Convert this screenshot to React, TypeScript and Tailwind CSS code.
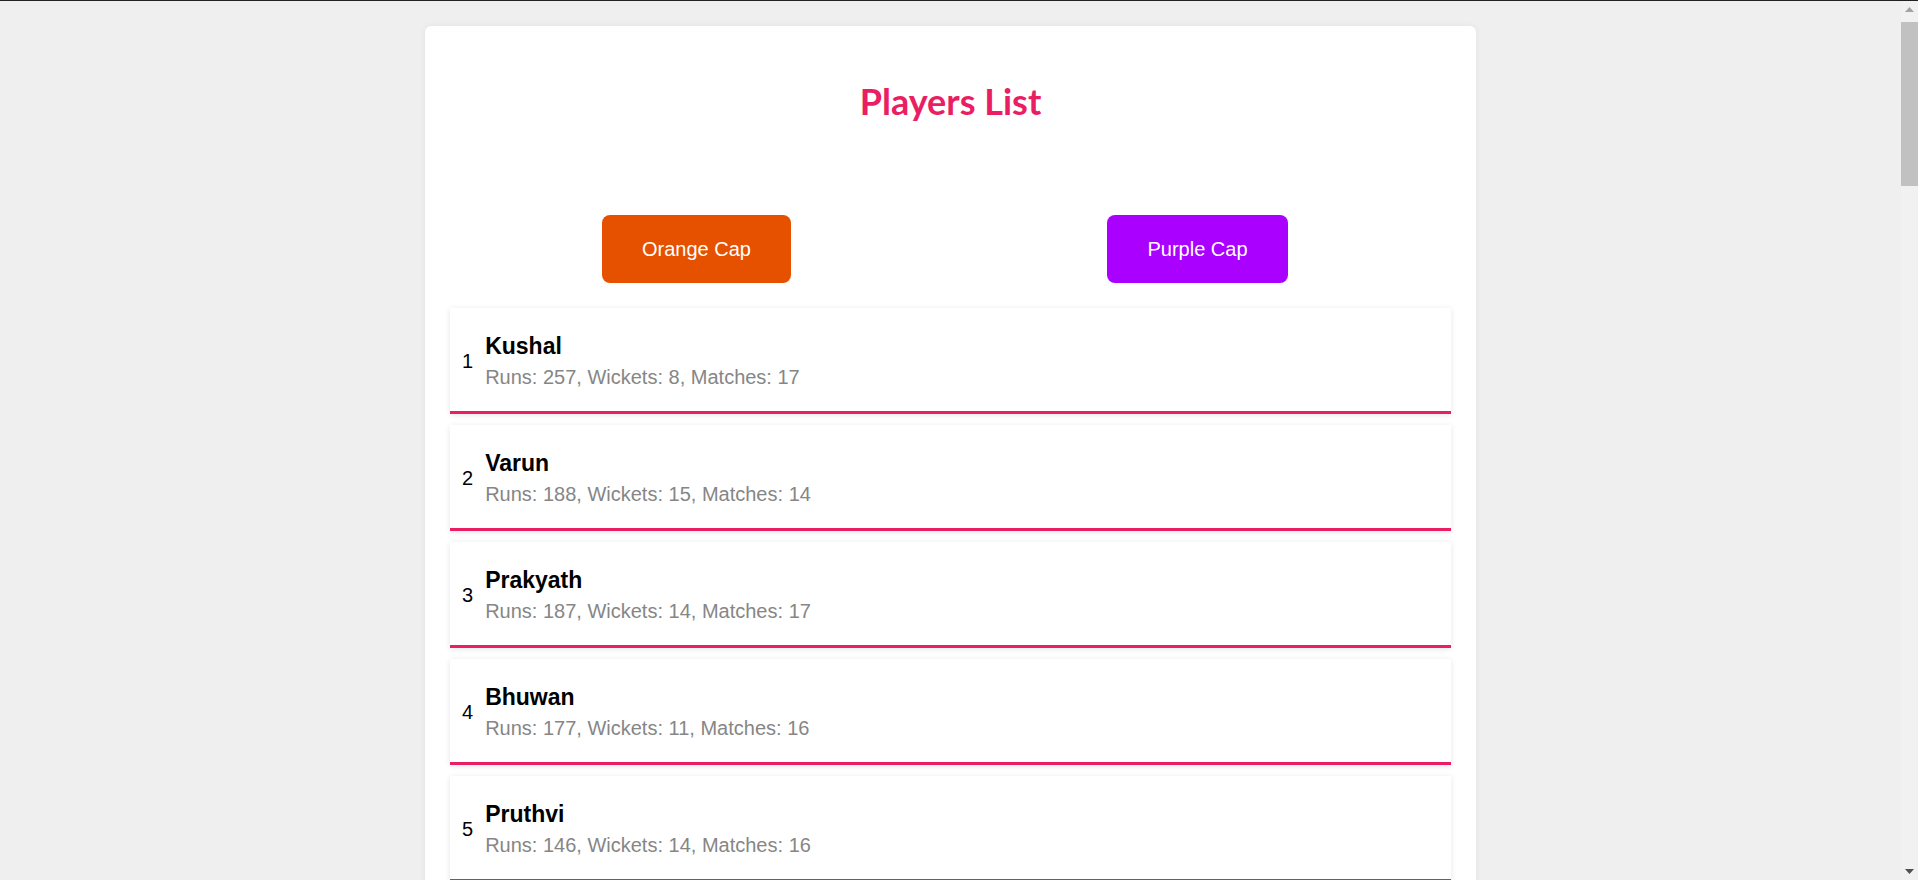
const players = [
  { name: "Kushal", runs: 257, wickets: 8, matches: 17 },
  { name: "Varun", runs: 188, wickets: 15, matches: 14 },
  { name: "Prakyath", runs: 187, wickets: 14, matches: 17 },
  { name: "Bhuwan", runs: 177, wickets: 11, matches: 16 },
  { name: "Pruthvi", runs: 146, wickets: 14, matches: 16 },
  { name: "Sharath", runs: 140, wickets: 9, matches: 15 },
  { name: "Manoj", runs: 132, wickets: 12, matches: 16 },
  { name: "Karthik", runs: 128, wickets: 6, matches: 14 },
  { name: "Rohan", runs: 121, wickets: 10, matches: 15 },
  { name: "Nikhil", runs: 117, wickets: 7, matches: 13 },
  { name: "Abhishek", runs: 110, wickets: 13, matches: 16 },
  { name: "Sagar", runs: 104, wickets: 5, matches: 12 },
  { name: "Darshan", runs: 98, wickets: 16, matches: 17 },
  { name: "Vinay", runs: 95, wickets: 9, matches: 14 },
  { name: "Akash", runs: 91, wickets: 4, matches: 11 },
  { name: "Chetan", runs: 87, wickets: 12, matches: 15 },
  { name: "Harsha", runs: 82, wickets: 8, matches: 13 },
  { name: "Shreyas", runs: 79, wickets: 3, matches: 10 },
  { name: "Tejas", runs: 74, wickets: 11, matches: 14 },
  { name: "Sumanth", runs: 70, wickets: 6, matches: 12 },
  { name: "Pavan", runs: 66, wickets: 10, matches: 13 },
  { name: "Naveen", runs: 61, wickets: 2, matches: 9 },
  { name: "Rakesh", runs: 58, wickets: 7, matches: 11 },
  { name: "Suhas", runs: 54, wickets: 9, matches: 12 },
  { name: "Yashas", runs: 50, wickets: 5, matches: 10 },
  { name: "Gagan", runs: 47, wickets: 8, matches: 11 },
  { name: "Adarsh", runs: 43, wickets: 1, matches: 8 },
  { name: "Kiran", runs: 40, wickets: 6, matches: 10 },
  { name: "Mithun", runs: 36, wickets: 4, matches: 9 },
  { name: "Rahul", runs: 33, wickets: 7, matches: 10 },
  { name: "Deepak", runs: 29, wickets: 3, matches: 8 },
  { name: "Ajay", runs: 25, wickets: 5, matches: 9 },
  { name: "Nithin", runs: 21, wickets: 2, matches: 7 },
  { name: "Girish", runs: 18, wickets: 4, matches: 8 },
  { name: "Santosh", runs: 14, wickets: 1, matches: 6 },
  { name: "Vikas", runs: 10, wickets: 2, matches: 5 },
];

// classic browser scrollbar on the right edge
function Scrollbar() {
  return (
    <div className="sticky top-0 self-start w-[17px] h-[879px] shrink-0 bg-[#f1f1f1] flex flex-col">
      <div className="h-[17px] flex items-center justify-center">
        <svg width="9" height="5" viewBox="0 0 9 5">
          <path d="M4.5 0L9 5H0z" fill="#a3a3a3" />
        </svg>
      </div>
      <div className="flex-1">
        <div className="mt-[4px] h-[164px] bg-[#c1c1c1]" />
      </div>
      <div className="h-[17px] flex items-center justify-center">
        <svg width="9" height="5" viewBox="0 0 9 5">
          <path d="M0 0H9L4.5 5z" fill="#505050" />
        </svg>
      </div>
    </div>
  );
}

export default function App() {
  return (
    <div className="flex min-h-screen bg-[#efefef] border-t border-[#202124] font-['Liberation_Sans',Arial,sans-serif]">
      <main className="flex-1 pt-[25px] pb-[25px]">
        <div className="w-[1051px] mx-auto bg-white rounded-[6px] shadow-[0_0_6px_rgba(0,0,0,0.06)] px-[25px] pt-[25px] pb-[25px]">
          {/* Title */}
          <h1 className="mt-[30px] text-center text-[36px] leading-[40px] font-bold text-[#e91e63] font-['Lato',sans-serif]">
            Players List
          </h1>

          {/* Cap buttons */}
          <div className="grid grid-cols-2 ml-[-4px] mr-[3px] mt-[94px]">
            <div className="flex justify-center">
              <button className="h-[68px] px-10 rounded-lg bg-[#e65100] text-white text-[20px] leading-[23px]">
                Orange Cap
              </button>
            </div>
            <div className="flex justify-center">
              <button className="h-[68px] px-10 rounded-lg bg-[#aa00ff] text-white text-[20px] leading-[23px]">
                Purple Cap
              </button>
            </div>
          </div>

          {/* List */}
          <ul className="mt-[25px] flex flex-col gap-[11px]">
            {players.map((player, index) => (
              <li
                key={player.name}
                className="flex items-center gap-3 bg-white pl-[12px] pt-[25px] pb-[22px] border-b-[3px] border-[#e91e63] shadow-[0_1px_6px_rgba(0,0,0,0.1)]"
              >
                <span className="text-[20px] leading-[23px] text-black">
                  {index + 1}
                </span>
                <div>
                  <div className="text-[23px] leading-[26px] font-bold text-black mb-[7px]">
                    {player.name}
                  </div>
                  <div className="text-[20px] leading-[23px] text-[#868686]">
                    Runs: {player.runs}, Wickets: {player.wickets}, Matches:{" "}
                    {player.matches}
                  </div>
                </div>
              </li>
            ))}
          </ul>
        </div>
      </main>
      <Scrollbar />
    </div>
  );
}
